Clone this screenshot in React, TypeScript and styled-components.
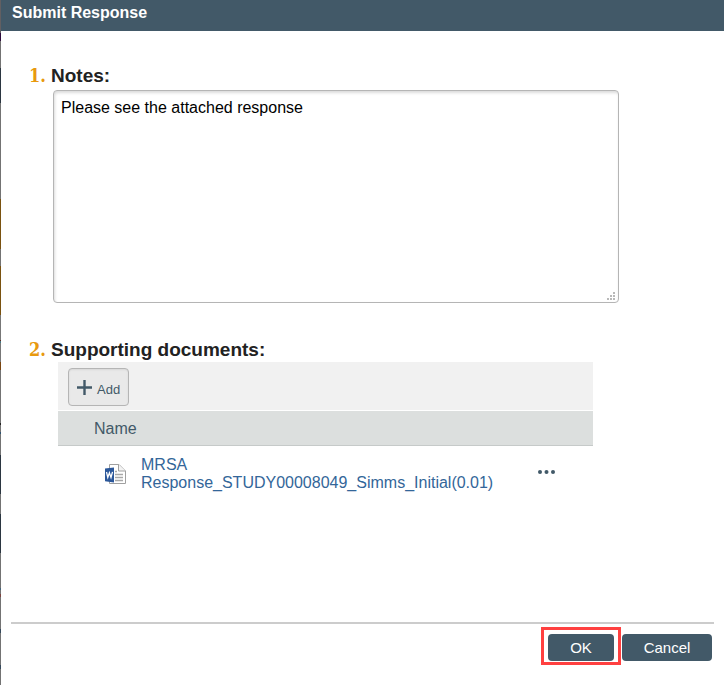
import React from "react";
import styled, { createGlobalStyle } from "styled-components";

const slate = "#425968";
const link = "#336699";

const GlobalStyle = createGlobalStyle`
  * { box-sizing: border-box; }
  body {
    margin: 0;
    background: #ffffff;
    color: #222222;
    font-family: "Liberation Sans", Arial, sans-serif;
    font-size: 16px;
    line-height: 18px;
  }
  button, textarea { font-family: inherit; }
`;

const Backdrop = styled.div`
  display: flex;
  min-height: 100vh;
  padding-left: 1px;
  background: linear-gradient(
    to bottom,
    #625f62 0 33px,
    #2d0b3c 33px 41px,
    #737373 41px 68px,
    #2b3641 68px 103px,
    #737373 103px 199px,
    #7a5210 199px 249px,
    #737373 249px 266px,
    #7a5210 266px 315px,
    #777777 315px 340px,
    #5d2a20 340px 341px,
    #467680 341px 343px,
    #777777 343px 362px,
    #7a4510 362px 370px,
    #737373 370px 423px,
    #222222 423px 425px,
    #737373 425px 432px,
    #2f526e 432px 434px,
    #737373 434px 455px,
    #2b3641 455px 494px,
    #737373 494px 514px,
    #2b3641 514px 553px,
    #737373 553px 588px,
    #44627a 588px 590px,
    #737373 590px 594px,
    #7b4440 594px 597px,
    #737373 597px 629px,
    #35495c 629px 633px,
    #737373 633px 665px,
    #35495c 665px 669px,
    #737373 669px
  );
`;

const Dialog = styled.main`
  display: flex;
  flex: 1;
  flex-direction: column;
  min-width: 0;
  background: #ffffff;
`;

const Header = styled.header`
  padding: 4px 11px 9px;
  background: ${slate};
`;

const Title = styled.h1`
  margin: 0;
  color: #ffffff;
  font-size: 16px;
  line-height: 18px;
`;

const Body = styled.div`
  flex: 1;
  padding: 33px 105px 0 24px;
`;

const Question = styled.section`
  display: grid;
  grid-template-columns: 21px minmax(0, 1fr);
  column-gap: 5px;
  margin-bottom: 35px;
`;

const Step = styled.span`
  color: #e8990f;
  font-family: "DejaVu Serif Condensed", "DejaVu Serif", serif;
  font-size: 18px;
  font-weight: bold;
  line-height: 24px;
  text-align: right;
`;

const Label = styled.label`
  font-size: 19px;
  font-weight: bold;
  line-height: 24px;
`;

const Heading = styled.h2`
  margin: 0;
  font-size: 19px;
  line-height: 24px;
`;

const Field = styled.div`
  position: relative;
  display: flex;
  grid-column: 2;
  margin: 2px 0 0 2px;
`;

const Notes = styled.textarea`
  flex: 1;
  min-width: 0;
  height: 213px;
  padding: 8px 7px;
  border: 1px solid #b5b5b5;
  border-radius: 4px;
  outline: none;
  background: #ffffff;
  box-shadow: inset 1px 2px 3px rgba(0, 0, 0, 0.14);
  color: #000000;
  font-size: 16px;
  line-height: 18px;
  resize: none;
`;

const Grip = styled.svg`
  position: absolute;
  right: 4px;
  bottom: 3px;
  pointer-events: none;
`;

const Documents = styled.div`
  grid-column: 2;
  margin: 0 26px 0 7px;
`;

const Toolbar = styled.div`
  display: flex;
  padding: 6px 10px 4px;
  border-bottom: 1px solid #ffffff;
  background: #f1f1f1;
`;

const AddButton = styled.button`
  display: flex;
  align-items: center;
  gap: 5px;
  height: 38px;
  padding: 0 8px;
  border: 1px solid #b5b5b5;
  border-radius: 4px;
  background: #e9e9e9;
  box-shadow: inset 0 1px 2px rgba(0, 0, 0, 0.08);
  color: ${slate};
  font-size: 13px;
  line-height: 16px;

  span { padding-top: 5px; }
`;

const Table = styled.table`
  width: 100%;
  border-collapse: separate;
  border-spacing: 0;
  table-layout: fixed;
`;

const HeadCell = styled.th`
  height: 35px;
  padding: 1px 36px 0;
  border-bottom: 1px solid #c6cac9;
  background: #dcdfde;
  color: ${slate};
  font-weight: normal;
  text-align: left;
`;

const NameCell = styled.td`
  padding: 10px 0 9px 47px;
`;

const FileEntry = styled.div`
  display: flex;
  align-items: center;
  gap: 15px;

  svg { flex: none; }
`;

const FileLink = styled.a`
  color: ${link};
  text-decoration: none;
`;

const MenuCell = styled.td`
  padding: 0 0 4px 38px;
`;

const MenuButton = styled.button`
  display: block;
  padding: 6px 0;
  border: 0;
  background: none;

  svg { display: block; }
`;

const Footer = styled.footer`
  display: flex;
  justify-content: flex-end;
  align-items: flex-start;
  gap: 1px;
  margin: 0 10px;
  padding: 3px 2px 20px;
  border-top: 2px solid #cccccc;
`;

const Highlight = styled.div`
  display: flex;
  padding: 4px 4px 1px;
  border: 3px solid #ff4040;
`;

const ActionRow = styled.div`
  display: flex;
  padding-top: 7px;
`;

const ActionButton = styled.button<{ $wide?: boolean }>`
  width: ${({ $wide }) => ($wide ? 90 : 66)}px;
  height: 27px;
  padding: 0;
  border: 0;
  border-radius: 4px;
  background: ${slate};
  color: #ffffff;
  font-size: 15px;
  line-height: 18px;
`;

function PlusIcon() {
  return (
    <svg width="15" height="15" viewBox="0 0 15 15" aria-hidden="true">
      <path d="M7.5 0v15M0 7.5h15" stroke={slate} strokeWidth="2.4" />
    </svg>
  );
}

function WordIcon() {
  return (
    <svg width="21" height="20" viewBox="0 0 21 20" aria-hidden="true">
      <path d="M4.5.5H14l6.5 6.5v12.5h-16z" fill="#fff" stroke="#a0a0a0" />
      <path d="M13.5.5V7h7" fill="#f3f3f3" stroke="#a0a0a0" />
      <path d="M10 7.5h2M10 10.5h8M10 13.5h8M10 16.5h8" stroke="#a8a8a8" strokeWidth="1.3" />
      <path d="M0 4.5 9 3.5v15L0 17.3z" fill="#2b579a" />
      <path d="m1.5 8 1.3 5.5L4.4 8.8 6 13.5 7.5 7.8" fill="none" stroke="#fff" strokeWidth="1.3" />
    </svg>
  );
}

function MoreIcon() {
  return (
    <svg width="17" height="4" viewBox="0 0 17 4" fill={slate} aria-hidden="true">
      <circle cx="2" cy="2" r="2" />
      <circle cx="8.5" cy="2" r="2" />
      <circle cx="15" cy="2" r="2" />
    </svg>
  );
}

export default function App() {
  return (
    <>
      <GlobalStyle />
      <Backdrop>
        <Dialog>
          <Header>
            <Title>Submit Response</Title>
          </Header>
          <Body>
            <Question>
              <Step>1.</Step>
              <Label htmlFor="notes">Notes:</Label>
              <Field>
                <Notes id="notes" defaultValue="Please see the attached response" />
                <Grip width="8" height="8" viewBox="0 0 8 8" fill="#b9b9b9" aria-hidden="true">
                  <path d="M6 0h2v2H6zM3 3h2v2H3zM6 3h2v2H6zM0 6h2v2H0zM3 6h2v2H3zM6 6h2v2H6z" />
                </Grip>
              </Field>
            </Question>
            <Question>
              <Step>2.</Step>
              <Heading id="documents">Supporting documents:</Heading>
              <Documents>
                <Toolbar>
                  <AddButton type="button">
                    <PlusIcon />
                    <span>Add</span>
                  </AddButton>
                </Toolbar>
                <Table aria-labelledby="documents">
                  <colgroup>
                    <col />
                    <col width="93" />
                  </colgroup>
                  <thead>
                    <tr>
                      <HeadCell colSpan={2}>Name</HeadCell>
                    </tr>
                  </thead>
                  <tbody>
                    <tr>
                      <NameCell>
                        <FileEntry>
                          <WordIcon />
                          <FileLink href="#document">
                            MRSA
                            <br />
                            Response_STUDY00008049_Simms_Initial(0.01)
                          </FileLink>
                        </FileEntry>
                      </NameCell>
                      <MenuCell>
                        <MenuButton type="button" aria-label="Document actions">
                          <MoreIcon />
                        </MenuButton>
                      </MenuCell>
                    </tr>
                  </tbody>
                </Table>
              </Documents>
            </Question>
          </Body>
          <Footer>
            <Highlight>
              <ActionButton type="button">OK</ActionButton>
            </Highlight>
            <ActionRow>
              <ActionButton type="button" $wide>
                Cancel
              </ActionButton>
            </ActionRow>
          </Footer>
        </Dialog>
      </Backdrop>
    </>
  );
}
